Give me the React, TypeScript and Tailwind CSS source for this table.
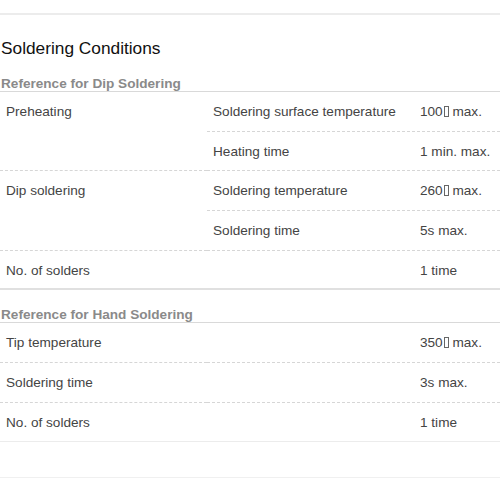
const Deg = () => (
  <span className="inline-block w-[5px] h-[11px] border border-[#666] align-[-1px] ml-[1px]" />
);

function Row({
  a,
  b,
  c,
  h = "h-[40px]",
  aClass = "",
  bcBorder = "border-b border-dashed border-[#d6d6d6]",
}: {
  a?: React.ReactNode;
  b?: React.ReactNode;
  c?: React.ReactNode;
  h?: string;
  aClass?: string;
  bcBorder?: string;
}) {
  return (
    <div className={`grid grid-cols-[207px_207px_1fr] ${h}`}>
      <div className={`px-[6px] pt-[12px] ${aClass}`}>{a}</div>
      <div className={`col-span-2 grid grid-cols-[207px_1fr] ${bcBorder}`}>
        <div className="px-[6px] pt-[12px]">{b}</div>
        <div className="px-[6px] pt-[12px]">{c}</div>
      </div>
    </div>
  );
}

export default function App() {
  return (
    <div
      className="w-[500px] h-[500px] bg-white text-[13.6px] leading-[16px] text-[#444]"
      style={{ fontFamily: '"Liberation Sans", Arial, sans-serif' }}
    >
      <div className="h-[13px]" />
      <div className="border-t-2 border-[#ececec]" />
      <h1 className="mt-[23px] text-[17.3px] leading-[20px] text-[#111] px-[1px]">Soldering Conditions</h1>

      <h2 className="mt-[18px] px-[1px] font-bold text-[#8a8a8a] leading-[15px] border-b border-[#d9d9d9]">
        Reference for Dip Soldering
      </h2>
      <Row
        a="Preheating"
        b="Soldering surface temperature"
        c={<>100<Deg /> max.</>}
      />
      <Row
        h="h-[39px]"
        b="Heating time"
        c="1 min. max."
        aClass="border-b border-dashed border-[#d6d6d6]"
      />
      <Row
        a="Dip soldering"
        b="Soldering temperature"
        c={<>260<Deg /> max.</>}
      />
      <Row
        b="Soldering time"
        c="5s max."
        aClass="border-b border-dashed border-[#d6d6d6]"
      />
      <Row
        h="h-[39px]"
        a="No. of solders"
        c="1 time"
        aClass="border-b-2 border-[#e0e0e0]"
        bcBorder="border-b-2 border-[#e0e0e0]"
      />

      <h2 className="mt-[17px] px-[1px] font-bold text-[#8a8a8a] leading-[15px] border-b border-[#d9d9d9]">
        Reference for Hand Soldering
      </h2>
      <Row
        a="Tip temperature"
        c={<>350<Deg /> max.</>}
        aClass="border-b border-dashed border-[#d6d6d6]"
      />
      <Row
        a="Soldering time"
        c="3s max."
        aClass="border-b border-dashed border-[#d6d6d6]"
      />
      <Row
        h="h-[39px]"
        a="No. of solders"
        c="1 time"
        aClass="border-b border-[#ececec]"
        bcBorder="border-b border-[#ececec]"
      />
      <div className="h-[36px] border-b border-[#f0f0f0]" />
    </div>
  );
}
